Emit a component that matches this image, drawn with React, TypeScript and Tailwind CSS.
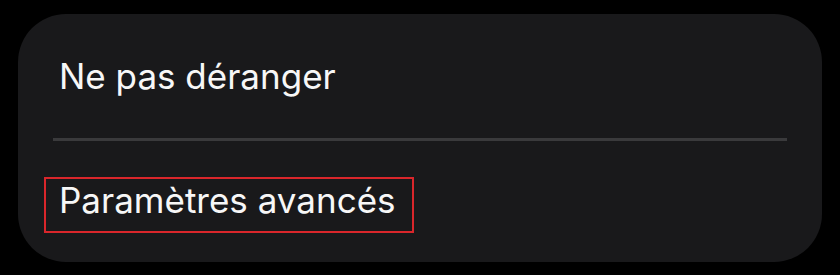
import React from "react";

export default function App() {
  return (
    <div className="w-[840px] h-[275px] bg-black pt-[14px] pl-[18px]" style={{ fontFamily: "Inter, 'Noto Sans', sans-serif" }}>
      <div className="w-[804px] h-[248px] rounded-[48px] bg-[#19191b] px-[35px] pt-[42px]">
        <div className="pl-[6px] text-[35px] leading-[40px] text-[#f7f7f7]">Ne pas déranger</div>
        <div className="mt-[42px] h-[3px] bg-[#3a3a3c]" />
        <div className="mt-[36px] flex">
          <span className="-ml-[9px] border-2 border-[#d9262b] pl-[13px] pr-[16px] pt-[1px] pb-[11px] text-[35px] leading-[40px] text-[#f7f7f7]">
            Paramètres avancés
          </span>
        </div>
      </div>
    </div>
  );
}
